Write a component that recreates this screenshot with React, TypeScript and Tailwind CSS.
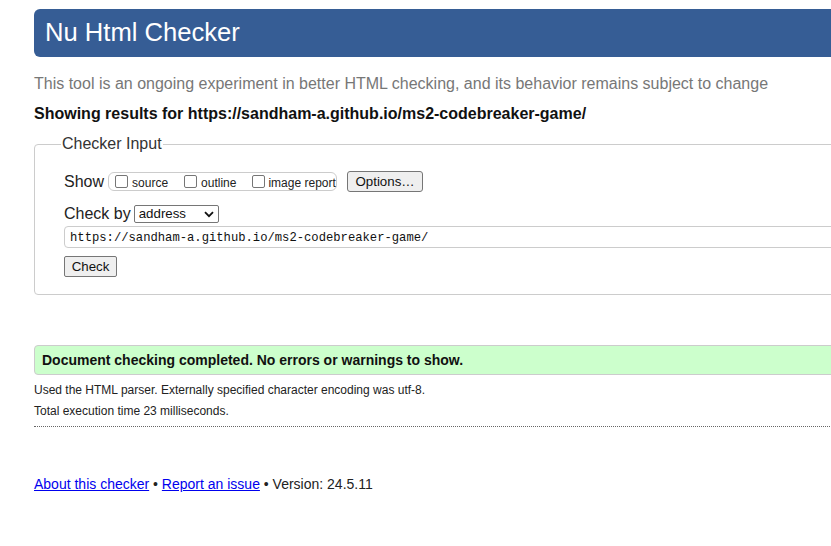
export default function App() {
  return (
    <div className="w-[831px] h-[546px] overflow-hidden bg-white font-['Liberation_Sans',Arial,sans-serif] text-[#222]">
      <div className="ml-[34px] w-[1000px] pt-[9px]">
        {/* Header */}
        <div className="h-[48px] bg-[#365d95] rounded-l-[6px] flex items-center pl-[11px]">
          <h1 className="text-[25.6px] leading-none text-white">Nu Html Checker</h1>
        </div>

        <p className="mt-[18px] text-[16px] leading-[18px] text-[#777]">
          This tool is an ongoing experiment in better HTML checking, and its behavior remains subject to change
        </p>
        <p className="mt-[12px] text-[16px] leading-[18px] font-bold text-[#111]">
          Showing results for https://sandham-a.github.io/ms2-codebreaker-game/
        </p>

        {/* Checker input */}
        <fieldset className="mt-[12px] border border-[#ccc] rounded-[4px] pl-[29px] pb-[17px] pt-[18px] h-[160px]">
          <legend className="px-[1px] ml-[-3px] text-[16px] leading-[18px] text-[#333]">Checker Input</legend>

          <div className="flex items-center h-[21px]">
            <span className="text-[16px] leading-[18px] text-[#222]">Show</span>
            <div className="ml-[4px] flex items-center h-[19px] w-[229px] border border-[#ccc] rounded-[6px] pl-[6px] text-[12px] text-[#222] whitespace-nowrap">
              <label className="flex items-center">
                <span className="w-[13px] h-[13px] border border-[#767676] rounded-[2px] bg-white" />
                <span className="ml-[4px] mt-[2px]">source</span>
              </label>
              <label className="flex items-center ml-[16px]">
                <span className="w-[13px] h-[13px] border border-[#767676] rounded-[2px] bg-white" />
                <span className="ml-[4px] mt-[2px]">outline</span>
              </label>
              <label className="flex items-center ml-[16px]">
                <span className="w-[13px] h-[13px] border border-[#767676] rounded-[2px] bg-white" />
                <span className="ml-[3px] mt-[2px]">image report</span>
              </label>
            </div>
            <button className="ml-[10px] h-[21px] w-[76px] border border-[#767676] rounded-[3px] bg-[#efefef] text-[13.3px] text-[#111]">
              Options…
            </button>
          </div>

          <div className="mt-[13px] flex items-center h-[18px]">
            <span className="text-[16px] leading-[18px] text-[#222]">Check by</span>
            <div className="ml-[3px] h-[18px] w-[85px] border border-[#767676] rounded-[2px] bg-white flex items-center justify-between pl-[4px] pr-[4px] text-[13.3px] text-[#111]">
              <span>address</span>
              <svg width="10" height="7" viewBox="0 0 10 7">
                <path d="M1 1.2 L5 5.2 L9 1.2" fill="none" stroke="#111" strokeWidth="1.8" />
              </svg>
            </div>
          </div>

          <div className="mt-[3px] h-[22px] border border-[#ccc] rounded-l-[4px] flex items-center pl-[5px] pt-[2px] font-['Liberation_Mono',monospace] text-[12.2px] text-[#111]">
            https://sandham-a.github.io/ms2-codebreaker-game/
          </div>

          <button className="mt-[8px] h-[21px] w-[53px] border border-[#767676] rounded-[2px] bg-[#efefef] text-[13.3px] text-[#111]">
            Check
          </button>
        </fieldset>

        {/* Result */}
        <div className="mt-[50px] h-[30px] bg-[#ccffcc] border border-[#ccc] rounded-l-[4px] flex items-center pl-[7px]">
          <span className="text-[14px] font-bold text-[#111]">Document checking completed. No errors or warnings to show.</span>
        </div>
        <p className="mt-[8px] text-[12px] leading-[14px] text-[#222]">
          Used the HTML parser. Externally specified character encoding was utf-8.
        </p>
        <p className="mt-[7px] text-[12px] leading-[14px] text-[#222]">Total execution time 23 milliseconds.</p>
        <div className="mt-[8px] border-t border-dotted border-[#666]" />

        {/* Footer */}
        <p className="mt-[49px] text-[14px] leading-[16px] text-[#222]">
          <a className="text-[#0000ee] underline" href="#">About this checker</a> •{" "}
          <a className="text-[#0000ee] underline" href="#">Report an issue</a> • Version: 24.5.11
        </p>
      </div>
    </div>
  );
}
